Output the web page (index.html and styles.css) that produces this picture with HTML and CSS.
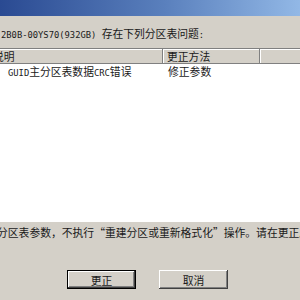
FILE: index.html
```html
<!DOCTYPE html>
<html lang="zh-CN">
<head>
    <meta charset="UTF-8">
    <title>分区表错误</title>
    <link rel="stylesheet" href="styles.css">
</head>
<body>
    <div class="titlebar"></div>

    <p class="prompt"><span class="lat">2B0B-00YS70(932GB) </span>存在下列分区表问题<span class="lat">:</span></p>

    <!-- 问题列表 -->
    <div class="list">
        <div class="list-head">
            <div class="col col-desc">说明</div>
            <div class="col col-fix">更正方法</div>
            <div class="col col-rest"></div>
        </div>
        <div class="list-row">
            <div class="col col-desc"><span class="lat">GUID</span>主分区表数据<span class="lat">CRC</span>错误</div>
            <div class="col col-fix">修正参数</div>
        </div>
    </div>

    <p class="note">分区表参数，不执行“重建分区或重新格式化”操作。请在更正后检查</p>

    <div class="buttons">
        <button class="btn btn-default">更正</button>
        <button class="btn">取消</button>
    </div>
</body>
</html>
```

FILE: styles.css
```css
body {
    margin: 0;
    width: 300px;
    height: 300px;
    overflow: hidden;
    background: #d4d0c8;
    font-family: "Noto Sans CJK SC", sans-serif;
    font-size: 10.8px;
    color: #1a1a1a;
}

.lat {
    font-family: "DejaVu Sans Mono", monospace;
    font-size: 8.8px;
}

.titlebar {
    height: 16px;
    background: linear-gradient(to right, #2a4a92, #5a80bd 55%, #92b8e6);
}

.prompt {
    margin: 10px 0 0;
    padding-left: 1px;
    line-height: 14px;
    height: 14px;
    white-space: nowrap;
}

/* 列表 */
.list {
    margin: 8px -4px 0;
    height: 173px;
    background: #fff;
    border-top: 1px solid #808080;
}

.list-head {
    display: flex;
    height: 14px;
    background: #d4d0c8;
    border-bottom: 1px solid #808080;
}

.list-head .col {
    line-height: 14px;
    border-right: 1px solid #808080;
    box-shadow: inset 1px 1px #fff;
    box-sizing: border-box;
}

.list-row {
    display: flex;
    height: 14px;
    line-height: 14px;
}

.col {
    white-space: nowrap;
    overflow: hidden;
}

.col-desc {
    width: 167px;
}

.list-head .col-desc {
    text-indent: -3px;
}

.list-row .col-desc {
    padding-left: 12px;
    box-sizing: border-box;
}

.col-fix {
    width: 97px;
    padding-left: 4px;
    box-sizing: border-box;
}

.list-row .col-fix {
    padding-left: 5px;
}

.col-rest {
    flex: 1;
}

.note {
    margin: 3px 0 0 -3px;
    line-height: 14px;
    height: 14px;
    white-space: nowrap;
}

/* 按钮 */
.buttons {
    display: flex;
    gap: 23px;
    margin-top: 31px;
    padding-left: 67px;
}

.btn {
    width: 69px;
    height: 19px;
    padding: 0;
    background: #d4d0c8;
    border: none;
    font-family: "Noto Sans CJK SC", sans-serif;
    font-size: 10.8px;
    color: #1a1a1a;
    box-shadow: inset -1px -1px #404040, inset 1px 1px #fff, inset -2px -2px #808080;
}

.btn-default {
    border: 1px solid #000;
}
```
